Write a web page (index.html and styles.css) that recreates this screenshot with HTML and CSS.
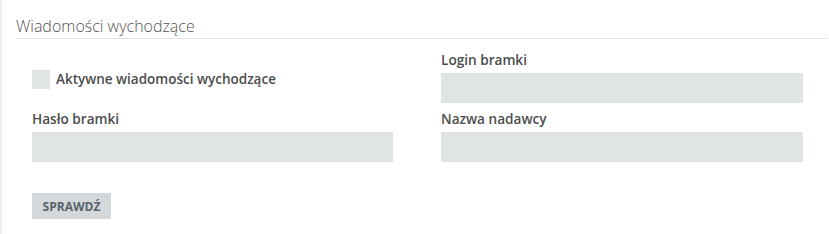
FILE: index.html
```html
<!DOCTYPE html>
<html lang="pl">
<head>
  <meta charset="UTF-8">
  <meta name="viewport" content="width=device-width, initial-scale=1.0">
  <title>Wiadomości wychodzące</title>
  <link rel="stylesheet" href="styles.css">
</head>
<body>
  <div class="panel">
    <h2 class="panel-title">Wiadomości wychodzące</h2>
    <form class="sms-form">
      <div class="form-grid">
        <!-- Row 1 -->
        <div class="field field-check">
          <label class="check">
            <input type="checkbox" id="smsActive">
            <span class="check-box"></span>
            <span class="check-label">Aktywne wiadomości wychodzące</span>
          </label>
        </div>
        <div class="field">
          <label for="gateLogin">Login bramki</label>
          <input type="text" id="gateLogin" name="login">
        </div>
        <!-- Row 2 -->
        <div class="field">
          <label for="gatePass">Hasło bramki</label>
          <input type="password" id="gatePass" name="password">
        </div>
        <div class="field">
          <label for="senderName">Nazwa nadawcy</label>
          <input type="text" id="senderName" name="sender">
        </div>
      </div>
      <button type="button" class="check-button">Sprawdź</button>
    </form>
  </div>
</body>
</html>
```

FILE: styles.css
```css
body {
  margin: 0;
  padding: 0;
  font-family: "Open Sans", Arial, sans-serif;
  background-color: #fff;
}
.panel {
  height: 234px;
  box-sizing: border-box;
  border-left: 2px solid #eeeeee;
  padding: 15px 1px 0 14px;
}
.panel-title {
  margin: 0;
  padding: 0 0 1px 0;
  font-size: 16px;
  line-height: 22px;
  font-weight: 300;
  color: #555;
  border-bottom: 1px solid #e4e4e4;
}
.sms-form {
  padding: 11px 0 0 16px;
}
.form-grid {
  display: grid;
  grid-template-columns: 361px 362px;
  column-gap: 48px;
  row-gap: 6px;
}
.field {
  display: flex;
  flex-direction: column;
}
.field label {
  font-size: 13.6px;
  line-height: 19px;
  font-weight: 600;
  color: #4d4d4d;
  margin-bottom: 4px;
}
.field input[type="text"],
.field input[type="password"] {
  height: 30px;
  box-sizing: border-box;
  border: none;
  background-color: #e1e4e5;
  padding: 0 10px;
  font-family: inherit;
  font-size: 14px;
}
.field-check {
  padding-top: 20px;
}
.check {
  display: flex;
  align-items: center;
  gap: 6px;
  margin: 0;
  cursor: pointer;
}
.check input {
  display: none;
}
.check-box {
  width: 18px;
  height: 19px;
  background-color: #e1e4e5;
}
.check-label {
  font-size: 13.5px;
  line-height: 19px;
  font-weight: 600;
  color: #4d4d4d;
}
.check-button {
  margin-top: 31px;
  width: 79px;
  height: 26px;
  border: none;
  background-color: #d5d8da;
  color: #58636d;
  font-family: inherit;
  font-size: 12px;
  font-weight: 700;
  letter-spacing: 0;
  text-transform: uppercase;
  padding: 0;
  cursor: pointer;
}
```
